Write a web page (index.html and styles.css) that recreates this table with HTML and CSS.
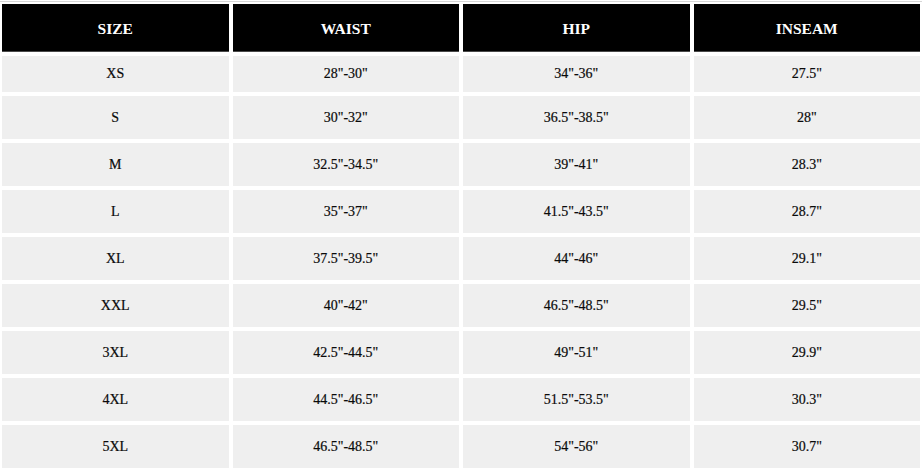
FILE: index.html
```html
<!DOCTYPE html>
<html lang="en">
<head>
<meta charset="utf-8">
<title>Size Chart</title>
<link rel="stylesheet" href="styles.css">
</head>
<body>
<div class="chart">
  <div class="row head">
    <div class="cell">SIZE</div><div class="cell">WAIST</div><div class="cell">HIP</div><div class="cell">INSEAM</div>
  </div>
  <div class="row first">
    <div class="cell">XS</div><div class="cell">28"-30"</div><div class="cell">34"-36"</div><div class="cell">27.5"</div>
  </div>
  <div class="row">
    <div class="cell">S</div><div class="cell">30"-32"</div><div class="cell">36.5"-38.5"</div><div class="cell">28"</div>
  </div>
  <div class="row">
    <div class="cell">M</div><div class="cell">32.5"-34.5"</div><div class="cell">39"-41"</div><div class="cell">28.3"</div>
  </div>
  <div class="row">
    <div class="cell">L</div><div class="cell">35"-37"</div><div class="cell">41.5"-43.5"</div><div class="cell">28.7"</div>
  </div>
  <div class="row">
    <div class="cell">XL</div><div class="cell">37.5"-39.5"</div><div class="cell">44"-46"</div><div class="cell">29.1"</div>
  </div>
  <div class="row">
    <div class="cell">XXL</div><div class="cell">40"-42"</div><div class="cell">46.5"-48.5"</div><div class="cell">29.5"</div>
  </div>
  <div class="row">
    <div class="cell">3XL</div><div class="cell">42.5"-44.5"</div><div class="cell">49"-51"</div><div class="cell">29.9"</div>
  </div>
  <div class="row">
    <div class="cell">4XL</div><div class="cell">44.5"-46.5"</div><div class="cell">51.5"-53.5"</div><div class="cell">30.3"</div>
  </div>
  <div class="row">
    <div class="cell">5XL</div><div class="cell">46.5"-48.5"</div><div class="cell">54"-56"</div><div class="cell">30.7"</div>
  </div>
</div>
</body>
</html>
```
FILE: styles.css
```css
html, body {
  margin: 0;
  padding: 0;
  background: #ffffff;
}
body {
  font-family: "Liberation Serif", "Times New Roman", serif;
  color: #0a0a0a;
}
.chart {
  width: 922px;
  box-sizing: border-box;
  padding: 2px 2px 0 2px;
  border-top: 1px solid #d6d6d6;
  margin-top: 1px;
  display: flex;
  flex-direction: column;
  gap: 4px;
}
.row {
  display: grid;
  grid-template-columns: repeat(4, 1fr);
  column-gap: 4px;
  height: 43px;
}
.row.head {
  height: 48px;
}
.row.first {
  height: 36px;
}
.cell {
  display: flex;
  align-items: center;
  justify-content: center;
  background: #efefef;
  font-size: 14px;
  -webkit-text-stroke: 0.2px #0a0a0a;
}
.head .cell {
  background: #000000;
  color: #ffffff;
  font-weight: bold;
  font-size: 15.5px;
  box-sizing: border-box;
  padding-top: 2px;
  border-bottom: 1px solid #4a4a4a;
  -webkit-text-stroke: 0;
}
```
